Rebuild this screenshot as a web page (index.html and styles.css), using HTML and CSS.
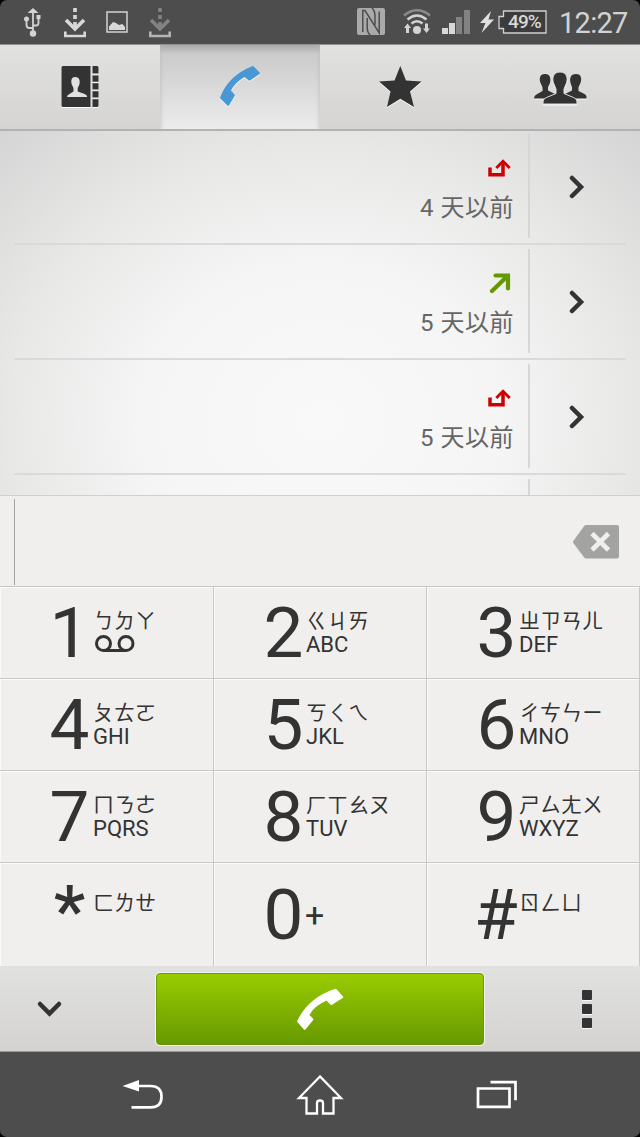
FILE: index.html
```
<!DOCTYPE html>
<html lang="zh-TW">
<head>
  <meta charset="utf-8">
  <title>Phone</title>
  <link rel="stylesheet" href="styles.css">
</head>
<body>
  <div id="phone">
    <div class="statusbar">
      <svg class="usb" width="18" height="30" viewBox="0 0 18 30" fill="none" stroke="#d3d3d3" stroke-width="1.8">
        <path d="M9 4v21M2.500 11v6q0 3 3 3H9M14.500 9v6q0 2.500-2.500 2.500H9"/>
        <path d="M9 0l5.500 5h-11z" fill="#d3d3d3" stroke="none"/>
        <circle cx="9" cy="25.500" r="3.200" fill="#d3d3d3" stroke="none"/>
        <circle cx="2.500" cy="11" r="2.500" fill="#d3d3d3" stroke="none"/>
        <path d="M12.500 7h4v4h-4z" fill="#d3d3d3" stroke="none"/>
      </svg>
      <svg class="down" width="22" height="30" viewBox="0 0 22 30" fill="none" stroke="#d8d8d8" stroke-width="3.600">
        <path d="M11 0v4M11 7v4M11 14v5"/>
        <path d="M2 12l9 9 9-9"/>
        <path d="M1.300 23.500V28h19.400v-4.500" stroke-width="2.600"/>
      </svg>
      <svg class="pic" width="22" height="22" viewBox="0 0 22 22">
        <rect x="1" y="1" width="20" height="20" fill="none" stroke="#d3d3d3" stroke-width="1.500"/>
        <path d="M3 19v-3.500l4-4.500 3 1 3 2 3.500-1 2.500 3v3z" fill="#d8d8d8"/>
      </svg>
      <svg class="down" width="22" height="30" viewBox="0 0 22 30" fill="none" stroke="#828282" stroke-width="3.600">
        <path d="M11 0v4M11 7v4M11 14v5"/>
        <path d="M2 12l9 9 9-9"/>
        <path d="M1.300 23.500V28h19.400v-4.500" stroke="#b4b4b4" stroke-width="2.600"/>
      </svg>
      <svg class="nfc" width="28" height="28" viewBox="0 0 28 28">
        <path d="M2 0h24q2 0 2 2v23q0 2-2 2H2q-2 0-2-2V2q0-2 2-2z" fill="#aaa"/>
        <path d="M5.800 24V2.500H8L22.200 25V3.500" fill="none" stroke="#4d4d4d" stroke-width="1.500"/>
        <path d="M10.200 10v10q0 4.500 3 7M18 17V7q0-4.500-3-7" fill="none" stroke="#4d4d4d" stroke-width="1.500"/>
      </svg>
      <svg class="wifi" width="28" height="26" viewBox="0 0 28 26" fill="none" stroke-width="2.500">
        <path d="M1 6.500Q14-4 27 6.500" stroke="#8a8a8a"/>
        <path d="M4.500 10.500Q14 2.500 23.500 10.500M8.500 14.500Q14 10 19.500 14.500" stroke="#d3d3d3"/>
        <circle cx="14" cy="21" r="4" fill="#d3d3d3"/>
        <path d="M4.500 14.500L8 19H6v5H3v-5H1zM23.500 24l3.500-4.500h-2v-5h-3v5h-2z" fill="#d3d3d3"/>
      </svg>
      <svg class="signal" width="28" height="24" viewBox="0 0 28 24">
        <path d="M0 18h6v6H0zM7 13h6v11H7z" fill="#d8d8d8"/>
        <path d="M14 7h6v17h-6zM22 0h6v24h-6z" fill="#828282"/>
      </svg>
      <svg class="bolt" width="14" height="22" viewBox="0 0 14 22">
        <path d="M11 0L0 12h5.500L1.500 22 14 8.500H8.500z" fill="#e0e0e0"/>
      </svg>
      <div class="battery">
        <svg width="49" height="24" viewBox="0 0 49 24">
          <path d="M5.500 1H48v22H5.500v-4.500H1v-12h4.500z" fill="#3c3c3c" stroke="#d0d0d0" stroke-width="1.300"/>
        </svg>
        <span>49%</span>
      </div>
      <div class="clock">12:27</div>
    </div>

    <div class="tabs">
      <div class="tab">
        <svg width="160" height="85" viewBox="0 0 160 85">
          <path d="M63 22h27.500v41H63q-1.500 0-1.500-1.500v-38Q61.500 22 63 22zM92.500 22h4.500q1.500 0 1.500 1.500v6h-6zM92.500 31.500h6v6.200h-6zM92.500 39.300h6v6.200h-6zM92.500 47.300h6v6.200h-6zM92.500 55.300h6v6.200q0 1.500-1.500 1.500h-4.500z"/>
          <path d="M75.200 33c5 0 5 5 4 8l-1.500 3v3.500l7 2.500q2.500 1 2.500 3H67q0-2 2.500-3l4-2.500V44L72 41c-1-3-1.500-8 3.200-8z" fill="#e0e0df"/>
        </svg>
      </div>
      <div class="tab active">
        <svg width="160" height="85" viewBox="0 0 160 85">
          <path d="M92 22.200q1-.4 1.800.4l6 6.200q.5.700-.3 1.200L90 36.500q-1 .5-1.600-.2L84.500 33Q75 38.500 71 46.500l3.500 4q.5.700.1 1.500L69 61.500q-.8.800-1.600 0L60.300 54.500q-.4-.6-.1-1.300Q68 32 92 22.200z"/>
        </svg>
      </div>
      <div class="tab">
        <svg width="160" height="85" viewBox="0 0 160 85">
          <path d="M80.300 22l5.700 14.500 15.500 1L90 47.500 94 63l-13.700-8.300L67 63l3.500-15.500L59 37.500l15.500-1z"/>
        </svg>
      </div>
      <div class="tab">
        <svg width="160" height="85" viewBox="0 0 160 85">
          <path d="M65 30c5.500 0 6 5 5 9l-2 4.500v3l8 4v4H54q0-3 2.500-4l6-3.500v-3.500L60.500 39c-1.500-4-1-9 4.500-9z"/>
          <path d="M96 30c5.500 0 6 5 4.500 9l-2 4.500V47l6 3q2.500 1.500 2 4.500H84v-4l8-4v-3L90.500 39c-1-4-.5-9 5.500-9z"/>
          <path d="M80 28c7 0 8 6.500 6.500 11L84 45v4.500l9.500 4Q97.500 55 97 60H63q-.5-5 3.500-6.500l9.500-4V45l-2.500-6C72 34.500 73 28 80 28z" stroke="#dcdcdb" stroke-width="1"/>
        </svg>
      </div>
    </div>

    <div class="calls">
      <div class="call">
        <div class="info">
          <svg width="24" height="22" viewBox="0 0 24 22" fill="none" stroke="#c00" stroke-width="3.500">
            <path d="M3 9.500v7.200h13V4"/><path d="M9.300 10l6.700-6.700 6.700 6.700" stroke-width="2.800"/>
          </svg>
          <div class="when">4 天以前</div>
        </div>
        <svg class="more" width="16" height="24" viewBox="0 0 16 24"><path d="M3 3l9 9-9 9"/></svg>
      </div>
      <div class="call">
        <div class="info">
          <svg width="24" height="22" viewBox="0 0 24 22" fill="none" stroke="#690" stroke-width="4.200">
            <path d="M8.500 2.500H21v13M20 3.500L5 18" stroke-linecap="round"/>
          </svg>
          <div class="when">5 天以前</div>
        </div>
        <svg class="more" width="16" height="24" viewBox="0 0 16 24"><path d="M3 3l9 9-9 9"/></svg>
      </div>
      <div class="call">
        <div class="info">
          <svg width="24" height="22" viewBox="0 0 24 22" fill="none" stroke="#c00" stroke-width="3.500">
            <path d="M3 9.500v7.200h13V4"/><path d="M9.300 10l6.700-6.700 6.700 6.700" stroke-width="2.800"/>
          </svg>
          <div class="when">5 天以前</div>
        </div>
        <svg class="more" width="16" height="24" viewBox="0 0 16 24"><path d="M3 3l9 9-9 9"/></svg>
      </div>
      <div class="call">
        <div class="info"></div>
      </div>
    </div>

    <div class="number">
      <div class="caret"></div>
      <svg width="47" height="34" viewBox="0 0 47 34">
        <path d="M14 0h31Q47 0 47 2v29.500q0 2-2 2H14q-1 0-1.800-1L1.300 18q-.8-1 0-2L12.200 1Q13 0 14 0z" fill="#a3a3a2"/>
        <path d="M20 8.500l16.500 16.500M36.500 8.500L20 25" stroke="#f0efee" stroke-width="4.600"/>
      </svg>
    </div>

    <div class="keypad">
      <div class="key"><b>1</b><div class="sub"><i>ㄅㄉㄚ</i>
        <svg width="42" height="20" viewBox="0 0 42 20" fill="none" stroke="#333" stroke-width="3">
          <circle cx="10.500" cy="9.500" r="7"/><circle cx="33" cy="9.500" r="7"/><path d="M10.500 16.500H33"/>
        </svg></div></div>
      <div class="key"><b>2</b><div class="sub"><i>ㄍㄐㄞ</i><span>ABC</span></div></div>
      <div class="key"><b>3</b><div class="sub"><i>ㄓㄗㄢㄦ</i><span>DEF</span></div></div>
      <div class="key"><b>4</b><div class="sub"><i>ㄆㄊㄛ</i><span>GHI</span></div></div>
      <div class="key"><b>5</b><div class="sub"><i>ㄎㄑㄟ</i><span>JKL</span></div></div>
      <div class="key"><b>6</b><div class="sub"><i>ㄔㄘㄣㄧ</i><span>MNO</span></div></div>
      <div class="key"><b>7</b><div class="sub"><i>ㄇㄋㄜ</i><span>PQRS</span></div></div>
      <div class="key"><b>8</b><div class="sub"><i>ㄏㄒㄠㄡ</i><span>TUV</span></div></div>
      <div class="key"><b>9</b><div class="sub"><i>ㄕㄙㄤㄨ</i><span>WXYZ</span></div></div>
      <div class="key"><b class="star">*</b><div class="sub"><i>ㄈㄌㄝ</i></div></div>
      <div class="key"><b>0</b><div class="plus">+</div></div>
      <div class="key"><b class="hash">#</b><div class="sub"><i>ㄖㄥㄩ</i></div></div>
    </div>

    <div class="actions">
      <svg class="hide" width="28" height="18" viewBox="0 0 28 18"><path d="M4 4l9.500 9.500L23 4"/></svg>
      <div class="callbtn">
        <svg width="50" height="46" viewBox="0 0 50 46">
          <path d="M38.500 2q1.500-.5 2.300.4l6.200 7.200q.6.800-.4 1.500L36 17.800q-1 .5-1.600-.3L30.500 13.500Q18 19 13.500 28l3.500 3.500q.6.800 0 1.800L9.500 42.500q-.8.800-1.600 0L1.500 35.300q-.5-.8-.2-1.600Q12 11 38.500 2z" fill="#fff"/>
        </svg>
      </div>
      <div class="menu"><div></div><div></div><div></div></div>
    </div>

    <div class="navbar">
      <svg width="140" height="86" viewBox="0 0 140 86">
        <path d="M36 35h14.500q11 0 11 10.700t-11 10.700H31.500"/>
        <path d="M22.500 35l16.500-6v11.500z" fill="#fff" stroke="none"/>
      </svg>
      <svg width="160" height="86" viewBox="0 0 160 86">
        <path d="M80 25.500L59 47h7.500v15.500h10.500V52q0-2.500 3-2.500t3 2.500v10.500h10.500V47h7.500z" stroke-width="2.300"/>
      </svg>
      <svg width="160" height="86" viewBox="0 0 160 86">
        <path d="M39 37.500h31.500v18.300H39zM51.500 31.200h25v18"/>
      </svg>
    </div>
  </div>
</body>
</html>
```
FILE: styles.css
```
body {
  margin: 0;
  background: #fff;
  font-family: Roboto, "Noto Sans CJK TC", sans-serif;
  color: #333;
}

#phone {
  width: 640px;
  height: 1137px;
  overflow: hidden;
  background: #000;
}

svg {
  display: block;
  flex: none;
}

/* status bar */
.statusbar {
  display: flex;
  align-items: flex-start;
  height: 44px;
  box-sizing: border-box;
  padding-top: 8px;
  background: #4d4d4d;
  border-radius: 7px 7px 0 0;
}
.usb {
  margin-left: 24px;
}
.down {
  margin-left: 22px;
}
.pic {
  margin: 3px 0 0 20px;
}
.pic + .down {
  margin-left: 21px;
}
.nfc {
  margin-left: 186px;
}
.wifi {
  margin: 1px 0 0 18px;
}
.signal {
  margin: 2px 0 0 11px;
}
.bolt {
  margin: 3px 0 0 10px;
}
.battery {
  position: relative;
  margin: 2px 0 0 4px;
}
.battery span {
  position: absolute;
  left: 10px;
  top: 0;
  font-size: 19px;
  line-height: 24px;
  font-weight: 500;
  letter-spacing: -0.9px;
  color: #d8d8d8;
}
.clock {
  margin-left: 12px;
  font-size: 29px;
  line-height: 30px;
  letter-spacing: -0.7px;
  color: #d3d3d3;
}

/* tabs */
.tabs {
  display: flex;
  height: 87px;
  box-sizing: border-box;
  border-top: 1px solid #929292;
  border-bottom: 2px solid #b2b2b2;
  background: linear-gradient(#e1e1e0, #d5d4d3);
}
.tab {
  width: 160px;
  height: 84px;
}
.tab svg {
  margin-top: -1px;
  fill: #333;
  filter: drop-shadow(0 1px 0 #fafafa);
}
.tab.active {
  background: linear-gradient(#a9a9a9, #cbcbcb 9px, #ececec);
  box-shadow: inset 5px 0 5px -5px #bbb, inset -5px 0 5px -5px #bbb;
}
.tab.active svg {
  fill: #4798d4;
}

/* call log */
.calls {
  height: 364px;
  overflow: hidden;
  background: radial-gradient(ellipse 400px 350px at 320px 290px, #f9f9f9, #f5f5f5 45%, #e8e8e7 78%, #d2d2d2 120%);
}
.call {
  display: flex;
  height: 115px;
  margin: 0 14px;
  padding-top: 4px;
  box-sizing: border-box;
  border-bottom: 2px solid #dadada;
}
.call:first-child {
  height: 114px;
  padding-top: 3px;
}
.info {
  width: 516px;
  height: 104px;
  box-sizing: border-box;
  padding-right: 14px;
  border-right: 2px solid #d6d6d6;
  text-align: right;
}
.info svg {
  margin: 24px 0 0 473px;
}
.when {
  margin-top: 14px;
  font-size: 24px;
  line-height: 28px;
  letter-spacing: 0.5px;
  color: #666;
}
.more {
  margin: 41px 0 0 39px;
}
.more path, .hide path {
  fill: none;
  stroke: #333;
  stroke-width: 4.5;
  stroke-linecap: round;
}

/* entered number */
.number {
  display: flex;
  justify-content: space-between;
  height: 91px;
  box-sizing: border-box;
  padding: 3px 21px 0 14px;
  border-top: 1px solid #d0d0d0;
  background: #f0efee;
}
.caret {
  width: 1px;
  height: 86px;
  background: #a3a3a3;
}
.number svg {
  margin-top: 26px;
}

/* keypad */
.keypad {
  display: grid;
  grid-template-columns: 214px 213px 213px;
  grid-template-rows: 92px 92px 92px 104px;
  background: #f0efee;
}
.key {
  display: flex;
  align-items: center;
  padding-left: 49px;
  border-top: 1px solid #c8c8c8;
  border-right: 1px solid #c8c8c8;
  box-shadow: inset 1px 1px 0 #fafafa;
}
.key b {
  width: 41px;
  font-size: 71px;
  line-height: 90px;
  font-weight: 400;
  text-align: center;
}
.key .star {
  margin-top: -8px;
  font-weight: 500;
}
.key .hash {
  text-indent: -2px;
}
.sub {
  height: 49px;
  margin-left: 2px;
}
.key:nth-child(3n+1) .sub {
  margin-left: 3px;
}
.sub i {
  display: block;
  height: 24px;
  font: 21px/22px "Noto Sans CJK TC", sans-serif;
}
.sub svg {
  margin-top: 2px;
}
.sub span {
  display: block;
  font-size: 22px;
  line-height: 26px;
}
.plus {
  margin-left: 1px;
  font-size: 34px;
}

/* bottom bar */
.actions {
  display: flex;
  height: 85px;
  background: linear-gradient(#e1e1e0, #d4d3d2);
}
.hide {
  margin: 34px 0 0 36px;
}
.callbtn {
  width: 328px;
  height: 72px;
  margin: 7px 0 0 92px;
  box-sizing: border-box;
  border: 1px solid #6a9a04;
  border-radius: 4px;
  background: linear-gradient(#9c0, #690);
  box-shadow: 0 0 0 1px #f4f4f4;
}
.callbtn svg {
  margin: 13px 0 0 139px;
}
.menu {
  margin: 24px 0 0 98px;
}
.menu div {
  width: 10px;
  height: 10px;
  margin-bottom: 4px;
  border-radius: 1px;
  background: #333;
  box-shadow: 0 1px 0 #f8f8f8;
}

/* system buttons */
.navbar {
  display: flex;
  height: 86px;
  padding-left: 100px;
  background: #4d4d4d;
  border-radius: 0 0 7px 7px;
  box-shadow: inset 0 1px 0 #999;
}
.navbar svg {
  fill: none;
  stroke: #fff;
  stroke-width: 2.7;
}
.navbar svg:last-child {
  margin-left: 39px;
}
```
